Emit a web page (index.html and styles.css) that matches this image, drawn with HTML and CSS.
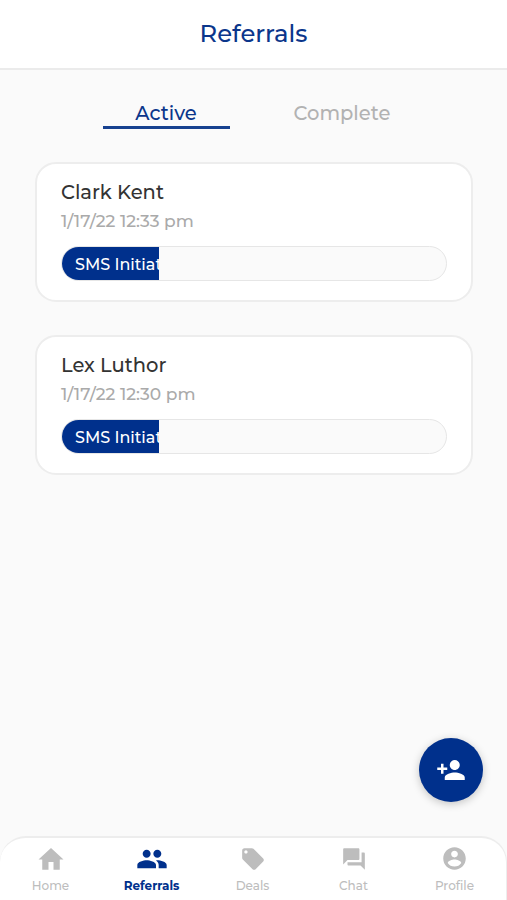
FILE: index.html
```html
<!DOCTYPE html>
<html lang="en">
<head>
<meta charset="utf-8">
<title>Referrals</title>
<link rel="stylesheet" href="styles.css">
</head>
<body>
<div class="app">
  <header class="header"><h1 class="title">Referrals</h1></header>
  <main class="content">
    <div class="tabs">
      <div class="tab tab-active">Active</div>
      <div class="tab">Complete</div>
    </div>
    <article class="card">
      <h2 class="name">Clark Kent</h2>
      <p class="date">1/17/22 12:33 pm</p>
      <div class="track"><div class="fill">SMS Initiated</div></div>
    </article>
    <article class="card">
      <h2 class="name">Lex Luthor</h2>
      <p class="date">1/17/22 12:30 pm</p>
      <div class="track"><div class="fill">SMS Initiated</div></div>
    </article>
  </main>
  <div class="fab">
    <svg width="30" height="30" viewBox="0 0 24 24"><path d="M15 12c2.210 0 4-1.790 4-4s-1.790-4-4-4-4 1.790-4 4 1.790 4 4 4zm-9-2V7H4v3H1v2h3v3h2v-3h3v-2H6zm9 4c-2.670 0-8 1.340-8 4v2h16v-2c0-2.660-5.330-4-8-4z"/></svg>
  </div>
  <nav class="nav">
    <div class="item"><div class="icon"><svg width="30" height="31" viewBox="0 0 24 24" preserveAspectRatio="none"><path d="M10 20v-6h4v6h5v-8h3L12 3 2 12h3v8z"/></svg></div><span>Home</span></div>
    <div class="item item-active"><div class="icon"><svg width="32" height="32" viewBox="0 0 24 24"><path d="M16 11c1.660 0 2.990-1.340 2.990-3S17.660 5 16 5s-3 1.340-3 3 1.340 3 3 3zm-8 0c1.660 0 2.990-1.340 2.990-3S9.660 5 8 5 5 6.340 5 8s1.340 3 3 3zm0 2c-2.330 0-7 1.170-7 3.500V19h14v-2.500C15 14.170 10.330 13 8 13zm8 0c-.29 0-.62.020-.97.050 1.160.84 1.970 1.970 1.970 3.450V19h6v-2.500c0-2.330-4.670-3.500-7-3.500z"/></svg></div><span>Referrals</span></div>
    <div class="item"><div class="icon"><svg width="26" height="26" viewBox="0 0 24 24"><path d="M21.410 11.580l-9-9C12.050 2.220 11.550 2 11 2H4c-1.100 0-2 .9-2 2v7c0 .55.220 1.050.59 1.420l9 9c.36.360.86.580 1.410.580s1.050-.22 1.410-.59l7-7c.37-.36.590-.86.590-1.410s-.23-1.060-.59-1.420zM5.500 7C4.670 7 4 6.330 4 5.500S4.670 4 5.500 4 7 4.670 7 5.500 6.330 7 5.500 7z"/></svg></div><span>Deals</span></div>
    <div class="item"><div class="icon"><svg width="26" height="26" viewBox="0 0 24 24"><path d="M21 6h-2v9H6v2c0 .55.450 1 1 1h11l4 4V7c0-.55-.45-1-1-1zm-4 6V3c0-.55-.45-1-1-1H3c-.55 0-1 .45-1 1v14l4-4h10c.55 0 1-.45 1-1z"/></svg></div><span>Chat</span></div>
    <div class="item"><div class="icon icon-profile"><svg width="27" height="27" viewBox="0 0 24 24"><path d="M12 2C6.480 2 2 6.480 2 12s4.480 10 10 10 10-4.480 10-10S17.520 2 12 2zm0 3c1.660 0 3 1.340 3 3s-1.340 3-3 3-3-1.340-3-3 1.340-3 3-3zm0 14.200c-2.500 0-4.710-1.280-6-3.220.03-1.990 4-3.080 6-3.080 1.990 0 5.970 1.090 6 3.080-1.290 1.940-3.500 3.220-6 3.220z"/></svg></div><span>Profile</span></div>
  </nav>
</div>
</body>
</html>
```
FILE: styles.css
```css
* { box-sizing: border-box; }
body {
  margin: 0;
  font-family: Montserrat, Inter, sans-serif;
  background: #fafafa;
  overflow: hidden;
}
h1, h2, p { margin: 0; font-weight: 500; }
svg { display: block; fill: currentColor; }
.app { position: relative; display: flex; flex-direction: column; height: 900px; }
.header {
  height: 70px;
  padding-top: 18px;
  background: #fff;
  border-bottom: 2px solid #ebebeb;
  text-align: center;
}
.title { font-size: 24.250px; line-height: 32px; color: #0b368b; }
.content { flex: 1; padding: 26px 34px 0 35px; }
.tabs { display: flex; justify-content: center; gap: 49px; margin-bottom: 33px; }
.tab {
  width: 127px;
  height: 33px;
  text-align: center;
  font-size: 19.500px;
  font-weight: 500;
  line-height: 34px;
  color: #b2b2b2;
  white-space: nowrap;
}
.tab-active { color: #0b368b; border-bottom: 3px solid #17418f; }
.card {
  height: 140px;
  margin-bottom: 33px;
  padding: 14px 24px 0;
  border: 2px solid #ededed;
  border-radius: 21px;
  background: #fff;
}
.name { font-size: 19.500px; line-height: 28px; color: #333; }
.date { margin-top: 2px; font-size: 17.100px; line-height: 26px; color: #aaa; }
.track {
  height: 35px;
  margin-top: 12px;
  border: 1px solid #e6e6e6;
  border-radius: 18px;
  background: #fafafa;
  overflow: hidden;
}
.fill {
  width: 25.200%;
  height: 100%;
  padding-left: 13px;
  overflow: hidden;
  background: #00308c;
  color: #fff;
  font-size: 16px;
  font-weight: 500;
  line-height: 35px;
  white-space: nowrap;
}
.fab {
  position: absolute;
  left: 418.500px;
  top: 738.400px;
  display: flex;
  align-items: center;
  justify-content: center;
  width: 64px;
  height: 64px;
  border-radius: 50%;
  background: #00308c;
  color: #fff;
  box-shadow: 0 2px 8px rgba(0, 0, 0, .22);
}
.nav {
  display: flex;
  height: 64px;
  padding-right: 1px;
  border-top: 2px solid #ededed;
  border-right: 1px solid #ededed;
  border-radius: 26px 26px 0 0;
  background: #fff;
}
.item {
  flex: 1;
  display: flex;
  flex-direction: column;
  align-items: center;
  color: #bdbdbd;
  font-size: 12px;
  font-weight: 500;
  line-height: 16px;
}
.icon { display: flex; align-items: center; height: 32px; margin: 5px 0 3px; }
.icon-profile { margin: 4px 0; }
.item-active { color: #00308c; font-weight: 700; }
```
